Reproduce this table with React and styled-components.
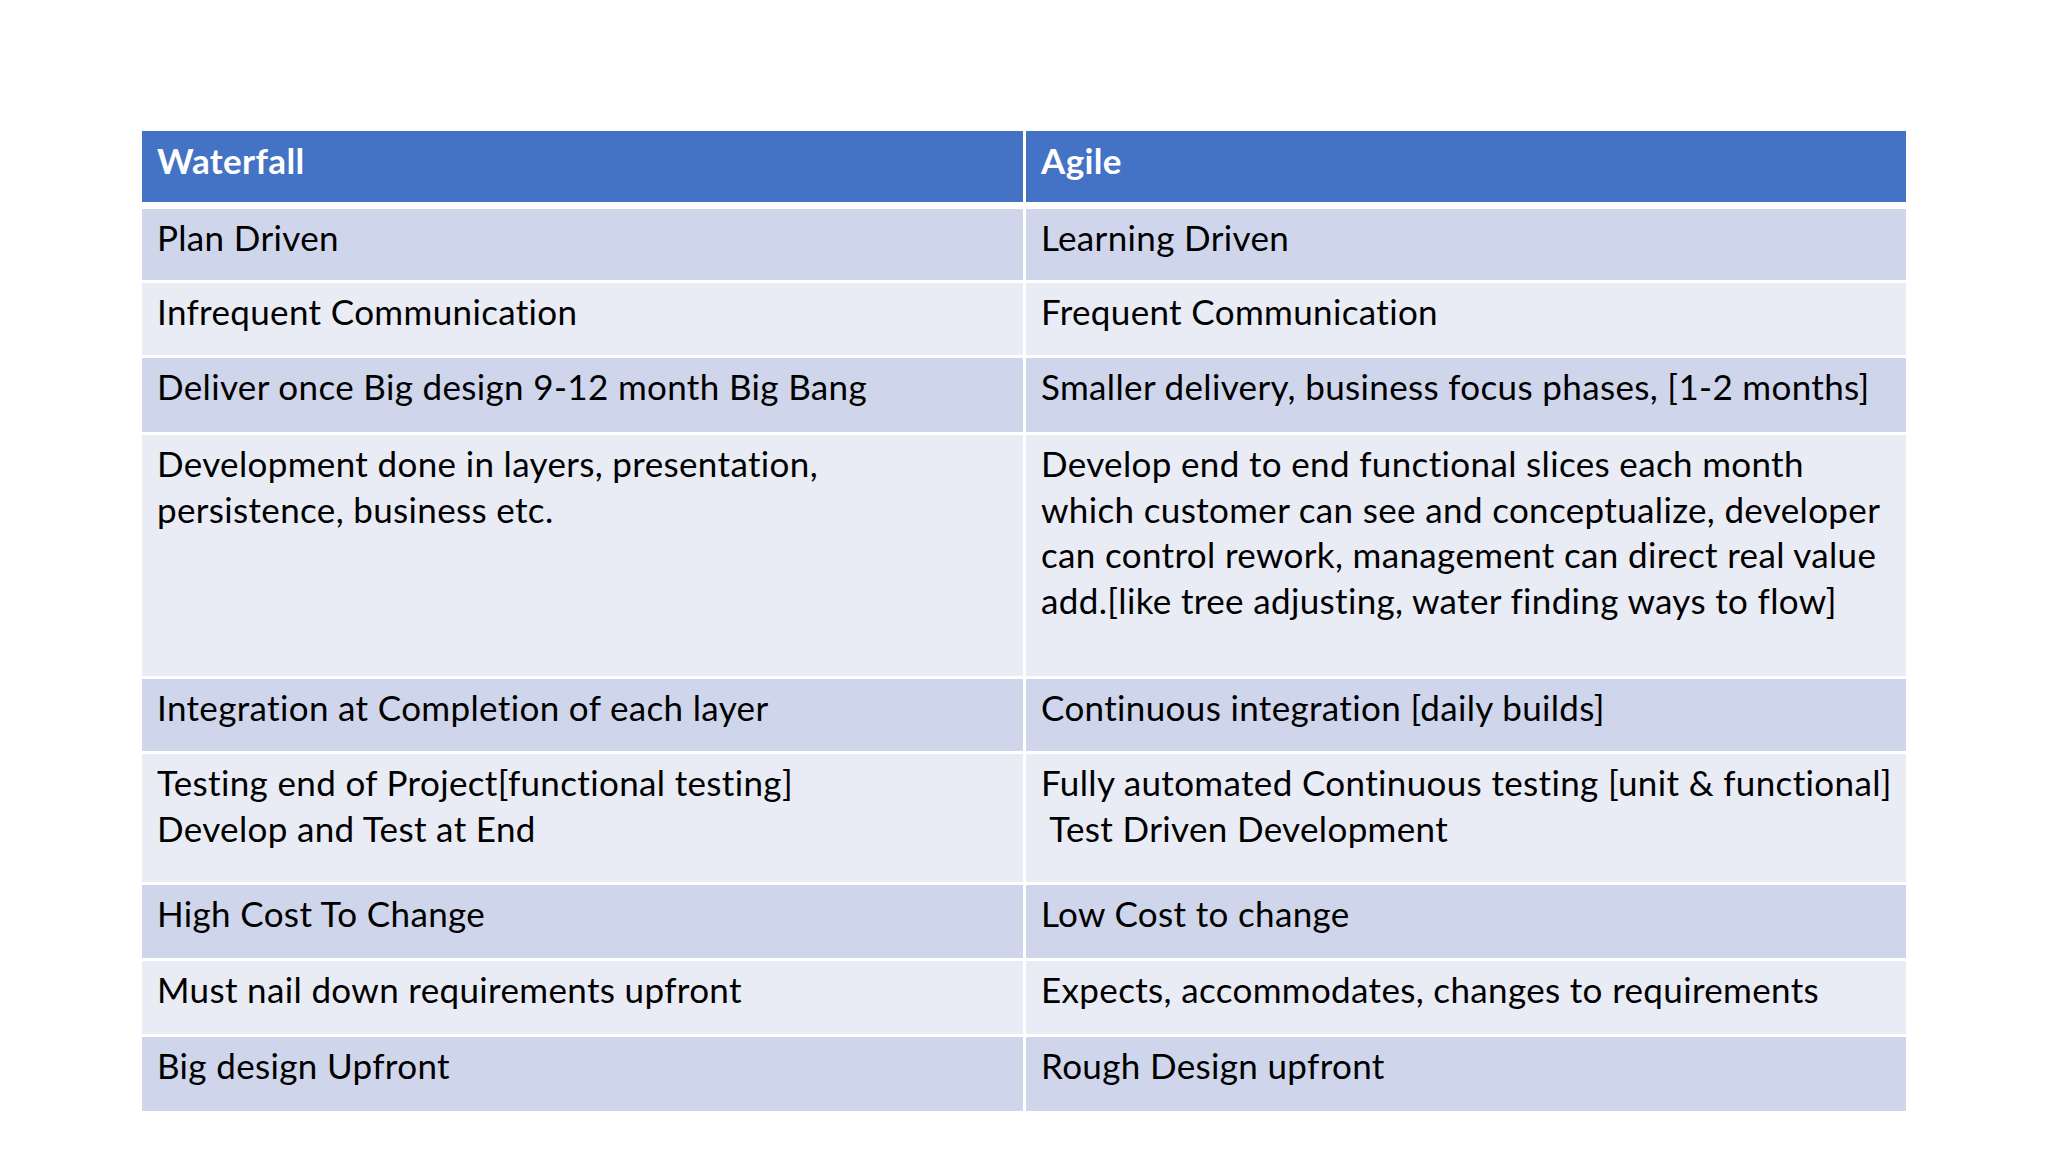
import styled, { createGlobalStyle } from 'styled-components';

const GlobalStyle = createGlobalStyle`
  html, body {
    margin: 0;
    padding: 0;
    background: #ffffff;
  }
  body {
    font-family: Lato, "Open Sans", "Liberation Sans", sans-serif;
    color: #000000;
  }
`;

const Page = styled.div`
  width: 2048px;
  height: 1152px;
  padding: 131px 0 0 142px;
  box-sizing: border-box;
  background: #ffffff;
`;

const Table = styled.div`
  display: flex;
  flex-direction: column;
  gap: 3px;
  width: 1764px;
`;

const Row = styled.div`
  display: grid;
  grid-template-columns: 881px 880px;
  column-gap: 3px;
  height: ${({ $h }) => $h}px;
  margin-bottom: ${({ $head }) => ($head ? '4px' : '0')};
`;

const Cell = styled.div`
  box-sizing: border-box;
  padding: ${({ $tone }) => ($tone === 'head' ? '7px' : '6px')} 8px 0 15px;
  font-size: 35px;
  line-height: 45.5px;
  white-space: pre;
  letter-spacing: 0.35px;
  background: ${({ $tone }) =>
    $tone === 'head' ? '#4472c4' : $tone === 'odd' ? '#cfd5ea' : '#e9ebf5'};
  color: ${({ $tone }) => ($tone === 'head' ? '#ffffff' : '#000000')};
  font-weight: ${({ $tone }) => ($tone === 'head' ? 700 : 400)};
`;

const rows = [
  ['Plan Driven', 'Learning Driven', 71],
  ['Infrequent Communication', 'Frequent Communication', 72],
  ['Deliver once Big design 9-12 month Big Bang', 'Smaller delivery, business focus phases, [1-2 months]', 74],
  [
    'Development done in layers, presentation,\npersistence, business etc.',
    'Develop end to end functional slices each month\nwhich customer can see and conceptualize, developer\ncan control rework, management can direct real value\nadd.[like tree adjusting, water finding ways to flow]',
    241,
  ],
  ['Integration at Completion of each layer', 'Continuous integration [daily builds]', 72],
  [
    'Testing end of Project[functional testing]\nDevelop and Test at End',
    'Fully automated Continuous testing [unit & functional]\n Test Driven Development',
    128,
  ],
  ['High Cost To Change', 'Low Cost to change', 73],
  ['Must nail down requirements upfront', 'Expects, accommodates, changes to requirements', 73],
  ['Big design Upfront', 'Rough Design upfront', 74],
];

export default function App() {
  return (
    <>
      <GlobalStyle />
      <Page>
        <Table>
          <Row $h={71} $head>
            <Cell $tone="head">Waterfall</Cell>
            <Cell $tone="head">Agile</Cell>
          </Row>
          {rows.map(([left, right, h], i) => {
            const tone = i % 2 === 0 ? 'odd' : 'even';
            return (
              <Row key={i} $h={h}>
                <Cell $tone={tone}>{left}</Cell>
                <Cell $tone={tone}>{right}</Cell>
              </Row>
            );
          })}
        </Table>
      </Page>
    </>
  );
}
